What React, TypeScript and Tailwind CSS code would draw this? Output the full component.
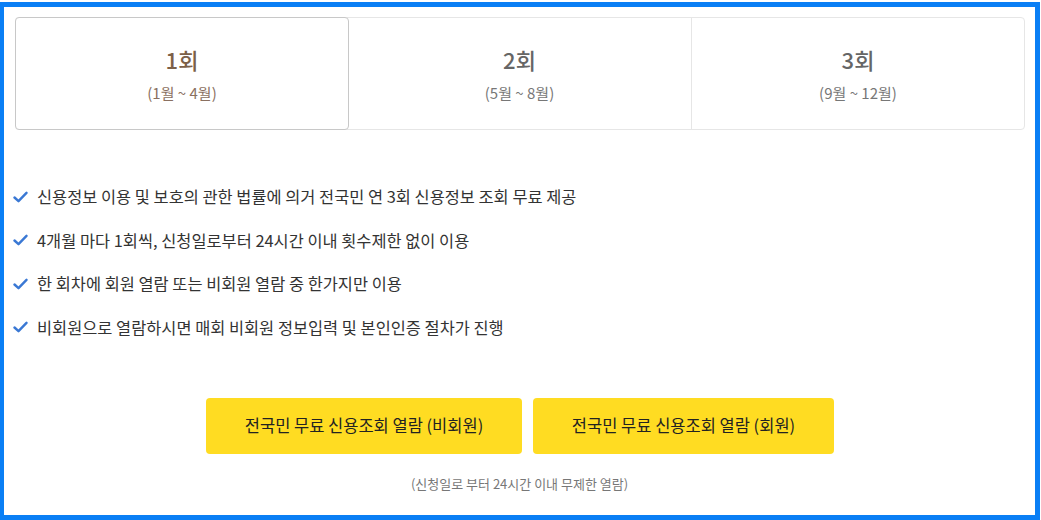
import React from "react";

const tabs = [
  { t: "1회", s: "(1월 ~ 4월)" },
  { t: "2회", s: "(5월 ~ 8월)" },
  { t: "3회", s: "(9월 ~ 12월)" },
];

const items = [
  "신용정보 이용 및 보호의 관한 법률에 의거 전국민 연 3회 신용정보 조회 무료 제공",
  "4개월 마다 1회씩, 신청일로부터 24시간 이내 횟수제한 없이 이용",
  "한 회차에 회원 열람 또는 비회원 열람 중 한가지만 이용",
  "비회원으로 열람하시면 매회 비회원 정보입력 및 본인인증 절차가 진행",
];

function Check() {
  return (
    <svg width="15" height="12" viewBox="0 0 15 12" fill="none">
      <path d="M1.5 6.5 L5.5 10.2 L13.5 1.8" stroke="#3a78d4" strokeWidth="2.4" strokeLinecap="round" strokeLinejoin="round" />
    </svg>
  );
}

export default function App() {
  return (
    <div className="w-[1041px] h-[520px] bg-white pt-[2px] pr-[1px]" style={{ fontFamily: '"Noto Sans CJK KR", "Noto Sans", sans-serif' }}>
      <div className="h-[518px] border-[5px] border-l-4 border-[#0a7ff5] bg-white flex flex-col">
        <div className="ml-[11px] mr-[10px] mt-[10px] h-[113px] border border-[#e6e6e6] rounded-[4px] flex">
          {tabs.map((tab, i) => (
            <div
              key={i}
              className={
                i === 0
                  ? "w-[334px] -m-px h-[113px] border border-[#c8c8c8] rounded-[4px] flex flex-col items-center justify-center bg-white"
                  : i === 1
                  ? "w-[344px] border-r border-[#e6e6e6] flex flex-col items-center justify-center"
                  : "flex-1 flex flex-col items-center justify-center"
              }
            >
              <div className={`text-[22px] leading-[28px] font-medium ${i === 0 ? "text-[#7c6048]" : "text-[#666]"}`}>{tab.t}</div>
              <div className={`mt-[11px] text-[15px] leading-[18px] ${i === 0 ? "text-[#8a7060]" : "text-[#777]"}`}>{tab.s}</div>
            </div>
          ))}
        </div>
        <ul className="mt-[57px] flex flex-col gap-[24.5px] pl-[9px]">
          {items.map((it, i) => (
            <li key={i} className="flex items-center gap-[9px] text-[16.4px] leading-[19px] text-[#333]">
              <Check />
              <span>{it}</span>
            </li>
          ))}
        </ul>
        <div className="mt-[61px] flex justify-center gap-[11px] pl-[1px]">
          <button className="w-[316px] h-[56px] rounded-[4px] bg-[#ffdc22] text-[16.5px] text-[#222]">전국민 무료 신용조회 열람 (비회원)</button>
          <button className="w-[301px] h-[56px] rounded-[4px] bg-[#ffdc22] text-[16.5px] text-[#222]">전국민 무료 신용조회 열람 (회원)</button>
        </div>
        <div className="mt-[22px] text-center text-[13px] leading-[16px] text-[#777]">(신청일로 부터 24시간 이내 무제한 열람)</div>
      </div>
    </div>
  );
}
